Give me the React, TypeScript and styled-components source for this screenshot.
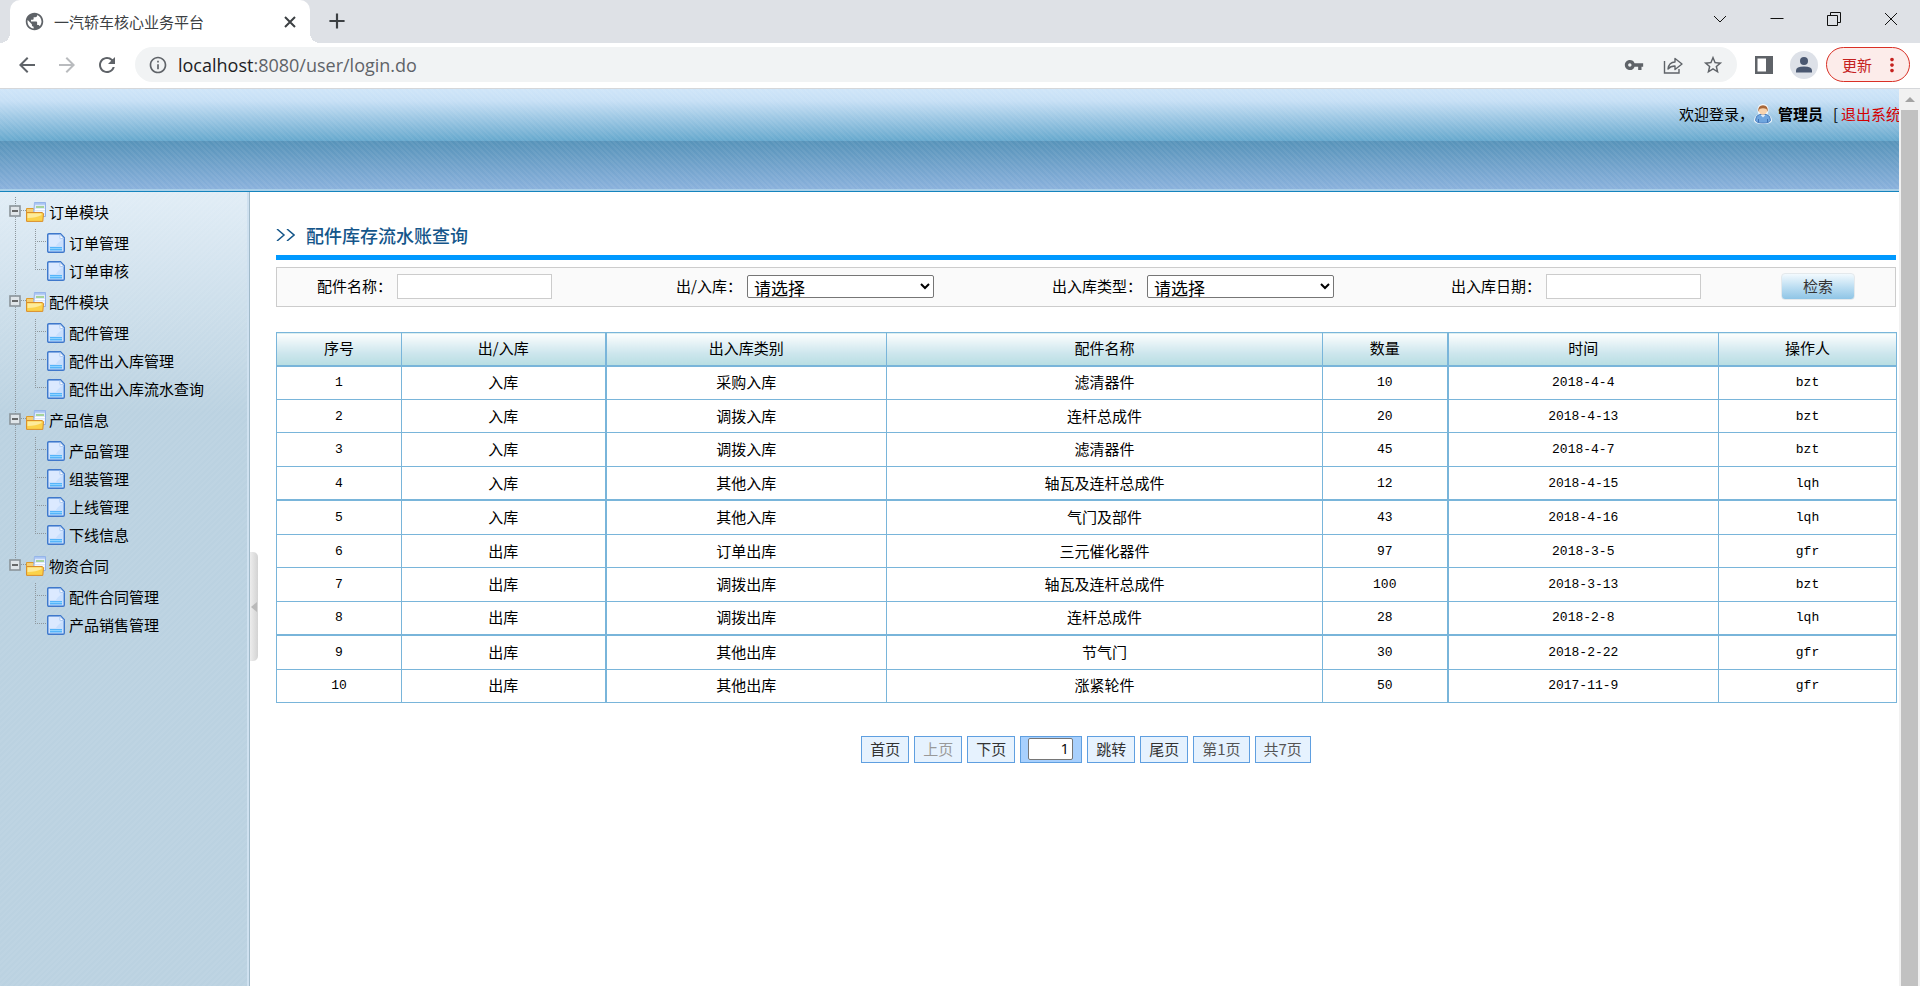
import React from "react";
import styled, { createGlobalStyle, css } from "styled-components";
import {
  MdAdd,
  MdArrowBack,
  MdArrowForward,
  MdInfoOutline,
  MdMoreVert,
  MdPublic,
  MdRefresh,
  MdStarBorder,
  MdVpnKey,
} from "react-icons/md";

const song = '"Noto Sans CJK SC", sans-serif';
const mono = '"Liberation Mono", "Noto Sans CJK SC", monospace';
const ui = '"Open Sans", "Noto Sans CJK SC", sans-serif';

const GlobalStyle = createGlobalStyle`
  * { box-sizing: border-box; }
  html, body { margin: 0; padding: 0; background: #fff; }
  body { font: 15px/20px ${song}; color: #000; }
  button, input, select { font: inherit; color: inherit; margin: 0; }
  ul { list-style: none; margin: 0; padding: 0; }
  a { color: inherit; text-decoration: none; }
`;

const Window = styled.div`
  display: flex;
  flex-direction: column;
  min-height: 100vh;
`;

/* ---------- browser frame ---------- */

const TabStrip = styled.div`
  display: flex;
  height: 43px;
  padding-left: 10px;
  background: #dee1e6;
  color: #3c4043;
  font-family: ${ui};
`;

const Tab = styled.div`
  position: relative;
  display: flex;
  align-items: center;
  width: 300px;
  padding: 0 10px 0 14px;
  gap: 9px;
  border-radius: 10px 10px 0 0;
  background: #fff;
  color: #5f6368;

  &::before,
  &::after {
    content: "";
    position: absolute;
    bottom: 0;
    width: 10px;
    height: 10px;
  }
  &::before {
    right: 100%;
    background: radial-gradient(circle at 0 0, #dee1e6 10px, #fff 10px);
  }
  &::after {
    left: 100%;
    background: radial-gradient(circle at 100% 0, #dee1e6 10px, #fff 10px);
  }
`;

const TabTitle = styled.span`
  flex: 1;
  color: #3c4043;
`;

const IconButton = styled.button<{ $dim?: boolean }>`
  display: flex;
  align-items: center;
  justify-content: center;
  flex: none;
  padding: 0;
  border: 0;
  background: none;
  color: ${(p) => (p.$dim ? "#b9bbbe" : "#5f6368")};
`;

const TabClose = styled(IconButton)`
  color: #3c4043;
`;

const NewTab = styled(IconButton)`
  width: 54px;
  height: 42px;
  color: #3c4043;
`;

const WindowButtons = styled.div`
  display: flex;
  margin: 0 1px 0 auto;
  height: 38px;
`;

const WindowButton = styled(IconButton)`
  width: 57px;
  color: #111;
`;

const Toolbar = styled.div`
  display: flex;
  align-items: center;
  height: 46px;
  padding: 0 10px 2px 15px;
  border-bottom: 1px solid #d5d7da;
  background: #fff;
  font-family: ${ui};
`;

const NavButtons = styled.div`
  display: flex;
  gap: 16px;
  margin-right: 16px;
`;

const AddressBar = styled.div`
  display: flex;
  align-items: center;
  flex: 1;
  height: 35px;
  padding: 0 13px;
  gap: 18px;
  border-radius: 18px;
  background: #f1f3f4;
  color: #5f6368;
`;

const Url = styled.div`
  display: flex;
  align-items: center;
  flex: 1;
  gap: 10px;
  font-size: 18px;
`;

const Host = styled.span`
  color: #202124;
`;

const ToolbarEnd = styled.div`
  display: flex;
  align-items: center;
  margin-left: 18px;
`;

const Avatar = styled.span`
  display: flex;
  margin: 0 8px 0 17px;
`;

const UpdateButton = styled.button`
  display: flex;
  align-items: center;
  justify-content: space-between;
  width: 84px;
  height: 35px;
  padding: 0 6px 0 15px;
  border: 1px solid #d93025;
  border-radius: 18px;
  background: #fcecea;
  color: #c5221f;
`;

/* ---------- application ---------- */

const Viewport = styled.div`
  display: flex;
  flex: 1;
`;

const Page = styled.div`
  display: flex;
  flex-direction: column;
  flex: 1;
  min-width: 0;
`;

const Banner = styled.header`
  display: flex;
  justify-content: flex-end;
  align-items: flex-start;
  height: 103px;
  padding-top: 15px;
  overflow: hidden;
  border-bottom: 1px solid #1584bd;
  background:
    linear-gradient(#a9cfe8, #a9cfe8) 0 100% / 100% 2px no-repeat,
    repeating-linear-gradient(45deg, rgba(255, 255, 255, 0.06) 0 2px, transparent 2px 4px),
    linear-gradient(#cfe5f9 0, #c6dff5 12px, #66a8cd 52px, #5793b9 52px, #8ab1dc 100px);
`;

const Welcome = styled.div`
  display: flex;
  align-items: center;
  flex: none;
  margin-right: -2px;
  white-space: nowrap;
`;

const Bracket = styled.span`
  width: 18px;
  padding-right: 3px;
  text-align: right;
`;

const UserIcon = styled.svg`
  margin-right: 6px;
`;

const LogoutLink = styled.a`
  color: #d40000;
`;

const Body = styled.div`
  display: flex;
  flex: 1;
`;

const Sidebar = styled.nav`
  flex: none;
  width: 250px;
  padding-top: 5px;
  border-right: 1px solid #a0b9c9;
  box-shadow: inset -2px 0 #cfe1f0;
  background:
    repeating-linear-gradient(135deg, rgba(255, 255, 255, 0.05) 0 2px, transparent 2px 4px),
    linear-gradient(#e1edf6 0, #bbd2e1 220px);
`;

const dotsDown = "repeating-linear-gradient(#8e979d 0 1px, transparent 1px 2px)";
const dotsAcross = "repeating-linear-gradient(90deg, #8e979d 0 1px, transparent 1px 2px)";

const TreeGroup = styled.li`
  padding-bottom: 2px;
  background: ${dotsDown} 15px 0 / 1px 100% no-repeat;

  &:last-child {
    background-size: 1px 10px;
  }
`;

const GroupRow = styled.div`
  display: flex;
  align-items: center;
  height: 30px;
  margin-bottom: 2px;
  padding-left: 9px;
`;

const GroupIcon = styled.svg`
  margin: 0 3px 0 5px;
`;

const ExpandButton = styled.button`
  display: flex;
  padding: 0;
  border: 0;
  background: none;
  margin-bottom: 3px;
`;

const DashGlyph = styled.span`
  width: 5px;
  height: 1px;
  margin: 0 -5px 3px 0;
  background: ${dotsAcross};
`;

const TreeItem = styled.li`
  height: 28px;
  padding-left: 47px;
  background:
    ${dotsDown} 35px 0 / 1px 100% no-repeat,
    ${dotsAcross} 35px 12px / 11px 1px no-repeat;

  &:last-child {
    background-size: 1px 12px, 11px 1px;
  }
`;

const TreeLink = styled.a`
  display: flex;
  align-items: center;
  height: 28px;
  gap: 4px;
`;

const Content = styled.main`
  position: relative;
  flex: 1;
  min-width: 0;
  padding: 33px 3px 40px 26px;
`;

const CollapseHandle = styled.button`
  position: absolute;
  left: 0;
  top: 360px;
  display: flex;
  align-items: center;
  justify-content: center;
  width: 8px;
  height: 109px;
  padding: 0;
  border: 0;
  border-radius: 0 5px 5px 0;
  background: linear-gradient(90deg, #ededed, #d3d3d3);
`;

const Heading = styled.h1`
  display: flex;
  align-items: center;
  gap: 11px;
  margin: 0 0 7px;
  padding-bottom: 10px;
  border-bottom: 5px solid #0099ff;
  color: #15568a;
  font-size: 18px;
  font-weight: 500;
`;

const SearchForm = styled.form`
  display: grid;
  grid-template-columns: 359fr 376fr 399fr 330fr 114fr;
  align-items: center;
  height: 40px;
  margin-bottom: 25px;
  padding: 0 0 1px 40px;
  border: 1px solid #ccc;
  background: #fafafa;
`;

const Field = styled.div`
  display: flex;
  align-items: center;
  gap: 5px;
  white-space: nowrap;
`;

const FieldLabel = styled.label`
  padding-bottom: 2px;
`;

const TextInput = styled.input`
  width: 155px;
  height: 25px;
  border: 1px solid #ccc;
  background: #fff;
`;

const Select = styled.select`
  width: 187px;
  height: 23px;
  padding: 0 2px;
  border: 1px solid #767676;
  border-radius: 2px;
  background-color: #fff;
  font-family: ${ui};
  font-size: 17px;
`;

const SearchButton = styled.button`
  width: 74px;
  height: 27px;
  padding: 0 0 2px;
  border: 1px solid #e4e9ec;
  border-radius: 4px;
  background: linear-gradient(#f3fafe, #b9dcf1 55%, #8fc5e6);
  color: #333;
`;

const line = "#79b5da";

const Table = styled.table`
  width: 100%;
  height: 371px;
  table-layout: fixed;
  border-collapse: collapse;
  text-align: center;
`;

const cell = css`
  padding: 0 0 1px;
  border: 1px solid ${line};
  font-weight: 400;

  &:nth-child(2),
  &:nth-child(5) {
    border-right-width: 2px;
  }
`;

const HeadCell = styled.th`
  ${cell}
  height: 33px;
  padding-bottom: 2px;
  border-bottom-width: 2px;
  background: linear-gradient(#fdfefe, #cde6ed 62%, #b8dee2);
`;

const latinCell = css`
  padding-top: 2px;
  font-family: ${mono};
  font-size: 13px;
`;

const Cell = styled.td<{ $latin?: boolean }>`
  ${cell}
  ${(p) => p.$latin && latinCell}
`;

const Row = styled.tr`
  &:nth-child(4n) > td {
    border-bottom-width: 2px;
  }
`;

const Pager = styled.div`
  display: flex;
  justify-content: center;
  gap: 5px;
  margin-top: 33px;
`;

const pagerBox = css`
  display: flex;
  align-items: center;
  height: 27px;
  padding: 0 8px 2px;
  border: 1px solid #5f9fe0;
  background: #e6f2fe;
  color: #333;
`;

const PagerButton = styled.button`
  ${pagerBox}
  &:disabled {
    color: #999;
  }
`;

const PagerText = styled.span`
  ${pagerBox}
  color: #555;
`;

const PagerJump = styled.label`
  ${pagerBox}
  padding: 0 8px 1px 7px;
  background: #a8d0fd;
`;

const PageInput = styled.input`
  width: 45px;
  height: 22px;
  padding: 0 3px 2px;
  border: 1px solid #767676;
  border-radius: 2px;
  background: #fff;
  color: #000;
  font-family: "Open Sans", sans-serif;
  line-height: 18px;
  text-align: right;
`;

const ScrollTrack = styled.div`
  display: flex;
  flex-direction: column;
  flex: none;
  width: 21px;
  padding: 0 2px;
  background: #f1f1f1;
`;

const ScrollArrow = styled.div`
  display: flex;
  align-items: center;
  justify-content: center;
  height: 21px;
`;

const ScrollThumb = styled.div`
  flex: 1;
  background: #c1c1c1;
`;

/* ---------- drawings ---------- */

const FolderGlyph = () => (
  <GroupIcon width="20" height="20" viewBox="0 0 20 20" aria-hidden="true">
    <path d="M.5 6.500h7l1.500 3v9H.5z" fill="#f6cf73" stroke="#dd9a2c" />
    <path d="M8.500.500h11v14h-12z" fill="#dfe9fb" stroke="#8fb0e6" />
    <path d="M8.500.800h10.700v2H8.300z" fill="#a9c4f3" />
    <path d="M10 5h8" stroke="#a5d39a" strokeWidth="2" />
    <path d="M9 7.500h10M9 10h10" stroke="#fff" />
    <path d="M.6 10.500h15.400l1.500 1-.7 7.900H.6z" fill="#fbd24a" stroke="#d98d2b" />
    <path d="M1.500 11.500H15l.8 1.500Q10 16 1.500 16z" fill="#fdeb9b" />
  </GroupIcon>
);

const FileGlyph = () => (
  <svg width="18" height="20" viewBox="0 0 18 20" aria-hidden="true">
    <path d="M2 .7h11.500l3.800 4V18q0 1.300-1.300 1.300H2Q.7 19.300.7 18V2Q.7.700 2 .7z" fill="#c9dffd" stroke="#3f78cb" strokeWidth="1.400" />
    <path d="M2 2h10.500v4.500H16Q11 9 9 13H2z" fill="#dbe9ff" />
    <path d="M13 1.500V5q0 .5.500.5h3.300z" fill="#fff" stroke="#a5c4f0" strokeWidth=".8" />
    <path d="M3 14h12v3.500H3z" fill="#55b5fa" />
    <path d="M3 15.500h12" stroke="#8fd3ff" />
  </svg>
);

const MinusGlyph = () => (
  <svg width="12" height="12" viewBox="0 0 12 12" aria-hidden="true">
    <rect x="1" y="1" width="10" height="10" fill="#dfe5e9" stroke="#8b949a" strokeWidth="1.600" />
    <path d="M3 6h6" stroke="#333" strokeWidth="1.400" />
  </svg>
);

const PersonGlyph = () => (
  <UserIcon width="18" height="20" viewBox="0 0 18 20" aria-hidden="true">
    <path d="M3.500 6Q3.500 0 9 0t5.500 6q0 2.500-1 4.500 4.500 1.500 4.500 6.500-1 3-9 3t-9-3q0-5 4.500-6.500-1-2-1-4.500z" fill="#fff" opacity=".85" />
    <path d="M1.500 16.500q0-5 4-6h7q4 1 4 6-1 2.500-7.500 2.500t-7.500-2.500z" fill="#6fa5de" stroke="#4a7fc0" />
    <path d="M6.500 11l2.500 2.500 2.500-2.500z" fill="#dcecfb" />
    <path d="M4.500 18v-3M13.500 18v-3" stroke="#3e72b6" />
    <circle cx="9" cy="6.500" r="4.200" fill="#f8d3ae" />
    <path d="M4.300 8Q3.500 1.200 9 1.200T13.700 8L12.500 5Q9 3.500 5.500 5z" fill="#a9683a" />
  </UserIcon>
);

const ShareGlyph = () => (
  <svg width="22" height="22" viewBox="0 0 22 22" fill="none" stroke="currentColor" strokeWidth="1.400" aria-hidden="true">
    <path d="M2.500 7v12H17v-4" />
    <path d="M6 15q1-7 7-7V4.500l7 5.500-7 5.500V12q-4.500 0-7 3z" strokeLinejoin="round" />
  </svg>
);

const SidePanelGlyph = () => (
  <svg width="18" height="18" viewBox="0 0 18 18" aria-hidden="true">
    <path fill="currentColor" fillRule="evenodd" d="M0 0h18v18H0zM2.500 2.500h8.500v13H2.500z" />
  </svg>
);

const AvatarGlyph = () => (
  <svg width="28" height="28" viewBox="0 0 28 28" aria-hidden="true">
    <circle cx="14" cy="14" r="14" fill="#dde1e8" />
    <circle cx="14" cy="10" r="4" fill="#4a5871" />
    <path d="M6 21.500v-2q0-4 8-4t8 4v2z" fill="#4a5871" />
  </svg>
);

const strokeProps = { fill: "none", stroke: "currentColor", "aria-hidden": true } as const;

/* ---------- data ---------- */

const tree = [
  { name: "订单模块", items: ["订单管理", "订单审核"] },
  { name: "配件模块", items: ["配件管理", "配件出入库管理", "配件出入库流水查询"] },
  { name: "产品信息", items: ["产品管理", "组装管理", "上线管理", "下线信息"] },
  { name: "物资合同", items: ["配件合同管理", "产品销售管理"] },
];

const columns = [
  { title: "序号", width: 125 },
  { title: "出/入库", width: 204 },
  { title: "出入库类别", width: 281 },
  { title: "配件名称", width: 436 },
  { title: "数量", width: 125 },
  { title: "时间", width: 271 },
  { title: "操作人", width: 178 },
];

const rows = [
  ["1", "入库", "采购入库", "滤清器件", "10", "2018-4-4", "bzt"],
  ["2", "入库", "调拨入库", "连杆总成件", "20", "2018-4-13", "bzt"],
  ["3", "入库", "调拨入库", "滤清器件", "45", "2018-4-7", "bzt"],
  ["4", "入库", "其他入库", "轴瓦及连杆总成件", "12", "2018-4-15", "lqh"],
  ["5", "入库", "其他入库", "气门及部件", "43", "2018-4-16", "lqh"],
  ["6", "出库", "订单出库", "三元催化器件", "97", "2018-3-5", "gfr"],
  ["7", "出库", "调拨出库", "轴瓦及连杆总成件", "100", "2018-3-13", "bzt"],
  ["8", "出库", "调拨出库", "连杆总成件", "28", "2018-2-8", "lqh"],
  ["9", "出库", "其他出库", "节气门", "30", "2018-2-22", "gfr"],
  ["10", "出库", "其他出库", "涨紧轮件", "50", "2017-11-9", "gfr"],
];

const BrowserFrame = () => (
  <>
    <TabStrip>
      <Tab>
        <MdPublic size={21} />
        <TabTitle>一汽轿车核心业务平台</TabTitle>
        <TabClose aria-label="关闭标签页">
          <svg width="20" height="20" viewBox="0 0 20 20" strokeWidth="2" {...strokeProps}>
            <path d="M5 5l10 10M15 5L5 15" />
          </svg>
        </TabClose>
      </Tab>
      <NewTab aria-label="新建标签页">
        <MdAdd size={26} />
      </NewTab>
      <WindowButtons>
        <WindowButton aria-label="搜索标签页">
          <svg width="14" height="14" viewBox="0 0 14 14" {...strokeProps}>
            <path d="M1 4l6 6 6-6" />
          </svg>
        </WindowButton>
        <WindowButton aria-label="最小化">
          <svg width="14" height="14" viewBox="0 0 14 14" {...strokeProps}>
            <path d="M.5 6.500h13" />
          </svg>
        </WindowButton>
        <WindowButton aria-label="还原">
          <svg width="14" height="14" viewBox="0 0 14 14" {...strokeProps}>
            <path d="M.5 3.500h10v10H.5zM3.500 3.500v-3h10v10h-3" />
          </svg>
        </WindowButton>
        <WindowButton aria-label="关闭">
          <svg width="14" height="14" viewBox="0 0 14 14" {...strokeProps}>
            <path d="M1 1l12 12M13 1L1 13" />
          </svg>
        </WindowButton>
      </WindowButtons>
    </TabStrip>
    <Toolbar>
      <NavButtons>
        <IconButton aria-label="后退"><MdArrowBack size={24} /></IconButton>
        <IconButton aria-label="前进" $dim><MdArrowForward size={24} /></IconButton>
        <IconButton aria-label="刷新"><MdRefresh size={24} /></IconButton>
      </NavButtons>
      <AddressBar>
        <Url>
          <MdInfoOutline size={20} />
          <span><Host>localhost</Host>:8080/user/login.do</span>
        </Url>
        <IconButton aria-label="密码"><MdVpnKey size={20} /></IconButton>
        <IconButton aria-label="分享"><ShareGlyph /></IconButton>
        <IconButton aria-label="收藏"><MdStarBorder size={22} /></IconButton>
      </AddressBar>
      <ToolbarEnd>
        <IconButton aria-label="侧边栏"><SidePanelGlyph /></IconButton>
        <Avatar><AvatarGlyph /></Avatar>
        <UpdateButton>
          更新
          <MdMoreVert size={22} />
        </UpdateButton>
      </ToolbarEnd>
    </Toolbar>
  </>
);

export default function App() {
  return (
    <Window>
      <GlobalStyle />
      <BrowserFrame />
      <Viewport>
        <Page>
          <Banner>
            <Welcome>
              欢迎登录，
              <PersonGlyph />
              <b>管理员</b>
              <Bracket>[</Bracket>
              <LogoutLink href="#logout">退出系统</LogoutLink>
            </Welcome>
          </Banner>
          <Body>
            <Sidebar>
              <ul>
                {tree.map((group) => (
                  <TreeGroup key={group.name}>
                    <GroupRow>
                      <ExpandButton aria-label={`折叠${group.name}`}><MinusGlyph /></ExpandButton>
                      <DashGlyph />
                      <FolderGlyph />
                      {group.name}
                    </GroupRow>
                    <ul>
                      {group.items.map((item) => (
                        <TreeItem key={item}>
                          <TreeLink href="#">
                            <FileGlyph />
                            {item}
                          </TreeLink>
                        </TreeItem>
                      ))}
                    </ul>
                  </TreeGroup>
                ))}
              </ul>
            </Sidebar>
            <Content>
              <CollapseHandle aria-label="收起侧边栏">
                <svg width="6" height="10" viewBox="0 0 6 10" aria-hidden="true">
                  <path d="M6 0v10L0 5z" fill="#b9b9b9" />
                </svg>
              </CollapseHandle>
              <Heading>
                <svg width="19" height="12" viewBox="0 0 19 12" strokeWidth="1.500" {...strokeProps}>
                  <path d="M1 0l7 6-7 6M11 0l7 6-7 6" />
                </svg>
                配件库存流水账查询
              </Heading>
              <SearchForm onSubmit={(e) => e.preventDefault()}>
                <Field>
                  <FieldLabel htmlFor="part">配件名称：</FieldLabel>
                  <TextInput id="part" />
                </Field>
                <Field>
                  <FieldLabel htmlFor="direction">出/入库：</FieldLabel>
                  <Select id="direction"><option>请选择</option></Select>
                </Field>
                <Field>
                  <FieldLabel htmlFor="kind">出入库类型：</FieldLabel>
                  <Select id="kind"><option>请选择</option></Select>
                </Field>
                <Field>
                  <FieldLabel htmlFor="date">出入库日期：</FieldLabel>
                  <TextInput id="date" />
                </Field>
                <SearchButton>检索</SearchButton>
              </SearchForm>
              <Table>
                <colgroup>
                  {columns.map((c) => <col key={c.title} width={c.width} />)}
                </colgroup>
                <thead>
                  <tr>
                    {columns.map((c) => <HeadCell key={c.title}>{c.title}</HeadCell>)}
                  </tr>
                </thead>
                <tbody>
                  {rows.map((row) => (
                    <Row key={row[0]}>
                      {row.map((value, i) => (
                        <Cell key={i} $latin={/^[\x20-\x7e]+$/.test(value)}>{value}</Cell>
                      ))}
                    </Row>
                  ))}
                </tbody>
              </Table>
              <Pager>
                <PagerButton>首页</PagerButton>
                <PagerButton disabled>上页</PagerButton>
                <PagerButton>下页</PagerButton>
                <PagerJump>
                  <PageInput aria-label="页码" defaultValue="1" />
                </PagerJump>
                <PagerButton>跳转</PagerButton>
                <PagerButton>尾页</PagerButton>
                <PagerText>第1页</PagerText>
                <PagerText>共7页</PagerText>
              </Pager>
            </Content>
          </Body>
        </Page>
        <ScrollTrack>
          <ScrollArrow>
            <svg width="10" height="5" viewBox="0 0 10 5" aria-hidden="true">
              <path d="M0 5l5-5 5 5z" fill="#a3a3a3" />
            </svg>
          </ScrollArrow>
          <ScrollThumb />
        </ScrollTrack>
      </Viewport>
    </Window>
  );
}
